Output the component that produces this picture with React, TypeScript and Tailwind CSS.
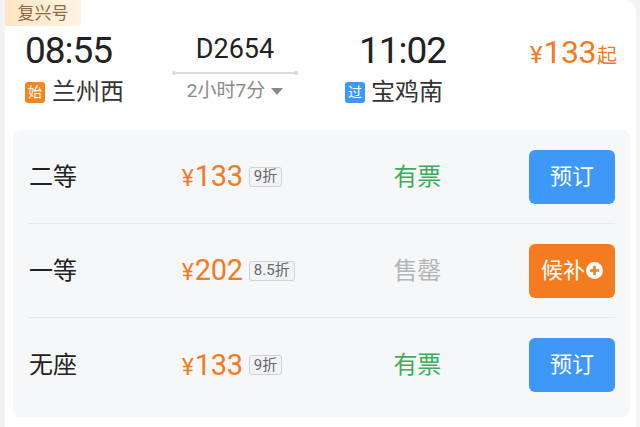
import React from "react";

const font = { fontFamily: '"Roboto", "Noto Sans CJK SC", sans-serif' };

function Row({
  label,
  price,
  discount,
  status,
  available,
  last,
}: {
  label: string;
  price: string;
  discount: string;
  status: string;
  available: boolean;
  last?: boolean;
}) {
  return (
    <div
      className={`flex items-center h-[94px] ${last ? "" : "border-b border-[#e6e8eb]"}`}
    >
      <div className="w-[154px] pl-[1px] text-[24px] text-[#222] leading-none">{label}</div>
      <div className="w-[212px] flex items-center">
        <span className="text-[#f47a1f] leading-none flex items-baseline">
          <span className="text-[23px] mr-[1px]">¥</span>
          <span className="text-[29px] tracking-[-0.3px]">{price}</span>
        </span>
        <span className="ml-[6px] h-[20px] px-[4px] flex items-center rounded-[3px] border border-[#cfd2d6] bg-[#f2f3f5] text-[15px] text-[#666] leading-none">
          {discount}
        </span>
      </div>
      <div
        className={`w-[136px] text-[24px] leading-none ${available ? "text-[#3aae5c]" : "text-[#b5b5b5]"}`}
      >
        {status}
      </div>
      <div
        className={`w-[86px] h-[54px] rounded-[6px] flex items-center justify-center text-white text-[22px] leading-none ${
          available ? "bg-[#3d98f7]" : "bg-[#f47b1f]"
        }`}
      >
        {available ? (
          <span>预订</span>
        ) : (
          <span className="flex items-center">
            <span>候补</span>
            <svg width="17" height="17" viewBox="0 0 16 16" className="ml-[1px]">
              <circle cx="8" cy="8" r="8" fill="#fff" />
              <rect x="3.6" y="6.8" width="8.8" height="2.4" rx="0.6" fill="#f47b1f" />
              <rect x="6.8" y="3.6" width="2.4" height="8.8" rx="0.6" fill="#f47b1f" />
            </svg>
          </span>
        )}
      </div>
    </div>
  );
}

export default function App() {
  return (
    <div className="w-[640px] h-[427px] bg-[#f3f3f4] overflow-hidden" style={font}>
      <div className="ml-[5px] w-[631px] h-[427px] bg-white rounded-tr-[12px] relative">
        <div className="absolute left-0 top-0 w-[76px] h-[26px] rounded-br-[4px] bg-gradient-to-r from-[#fde6c6] to-[#fff3e3] flex items-center justify-center text-[17px] text-[#8c6a3e] leading-none">
          复兴号
        </div>
        <div className="pt-[32px] pl-[20px] flex">
          <div className="w-[147px] flex flex-col">
            <div className="text-[37px] leading-none tracking-[-1px] text-[#222] h-[38px]">08:55</div>
            <div className="mt-[10px] flex items-center">
              <span className="w-[20px] h-[21px] rounded-[3px] bg-[#f5851f] text-white text-[14px] leading-none flex items-center justify-center">
                始
              </span>
              <span className="ml-[7px] text-[24px] leading-none text-[#333]">兰州西</span>
            </div>
          </div>
          <div className="w-[126px] flex flex-col items-center">
            <div className="mt-[4px] text-[27px] leading-none text-[#222] h-[30px]">D2654</div>
            <div className="mt-[5px] w-[126px] flex items-center">
              <span className="w-[4px] h-[4px] rounded-full bg-[#d8d8d8]" />
              <span className="flex-1 h-[1.5px] bg-[#dcdcdc]" />
              <span className="w-[4px] h-[4px] rounded-full bg-[#d8d8d8]" />
            </div>
            <div className="mt-[6px] flex items-center text-[19px] leading-none text-[#8a8a8a]">
              <span>2小时7分</span>
              <svg width="12" height="8" viewBox="0 0 12 8" className="ml-[6px] mt-[2px]">
                <path d="M0 0 H12 L6 7 Z" fill="#8a8a8a" />
              </svg>
            </div>
          </div>
          <div className="ml-[47px] w-[120px] flex flex-col">
            <div className="ml-[14px] text-[37px] leading-none tracking-[-1px] text-[#222] h-[38px]">11:02</div>
            <div className="mt-[10px] flex items-center">
              <span className="w-[20px] h-[21px] rounded-[3px] bg-[#3d98f7] text-white text-[14px] leading-none flex items-center justify-center">
                过
              </span>
              <span className="ml-[6px] text-[24px] leading-none text-[#333]">宝鸡南</span>
            </div>
          </div>
          <div className="flex-1 flex justify-end pr-[19px]">
            <div className="mt-[4px] flex items-baseline text-[#f47a1f] leading-none h-[34px]">
              <span className="text-[24px] mr-[1px]">¥</span>
              <span className="text-[32px] tracking-[-0.5px]">133</span>
              <span className="text-[20px] ml-[1px]">起</span>
            </div>
          </div>
        </div>
        <div className="absolute left-[8px] top-[130px] w-[617px] h-[287px] rounded-[8px] bg-[#f6f7f9] px-[15px]">
          <Row label="二等" price="133" discount="9折" status="有票" available />
          <Row label="一等" price="202" discount="8.5折" status="售罄" available={false} />
          <Row label="无座" price="133" discount="9折" status="有票" available last />
        </div>
      </div>
    </div>
  );
}
